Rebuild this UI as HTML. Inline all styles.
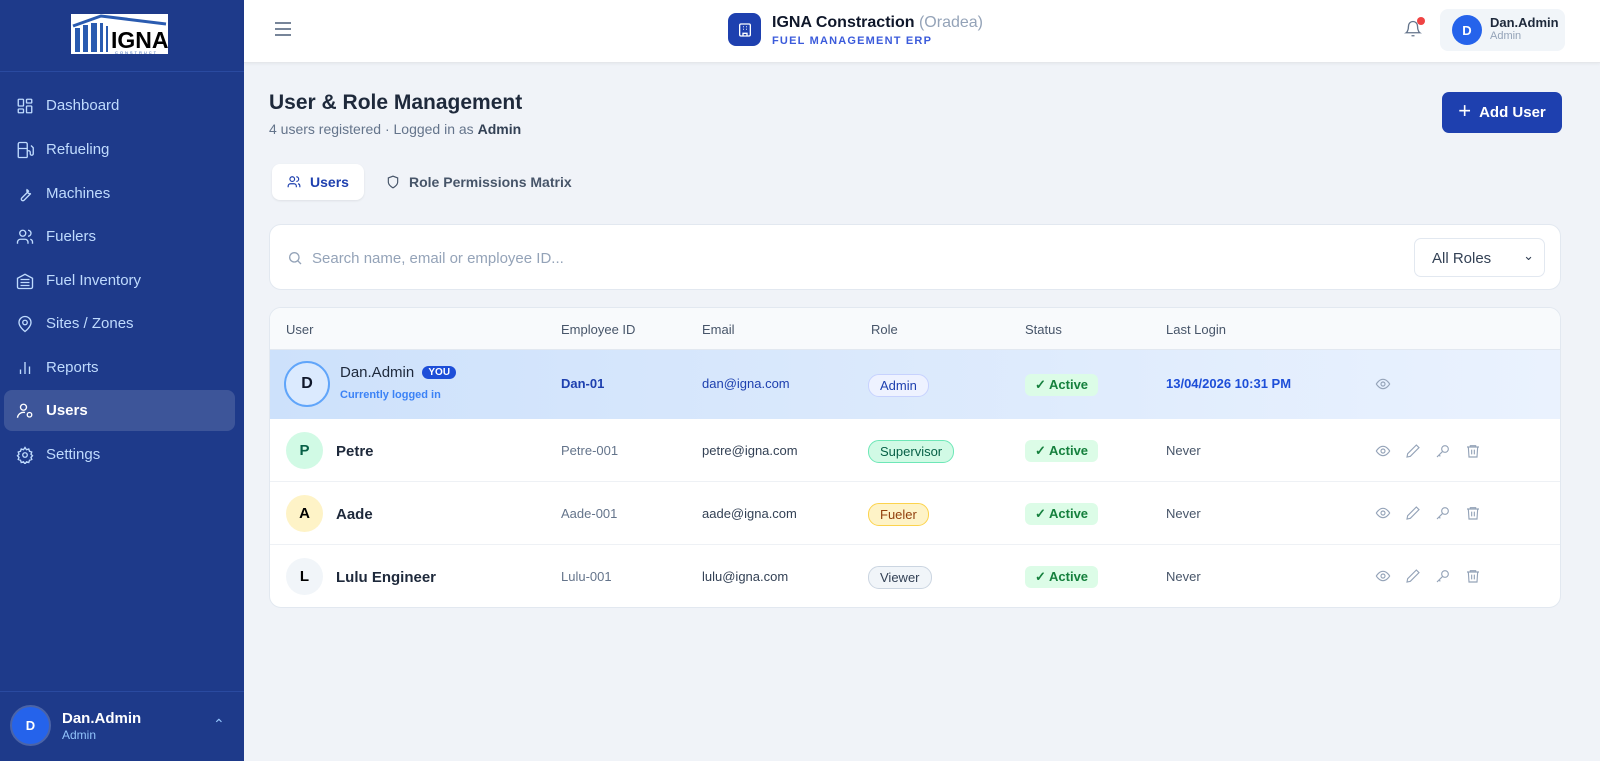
<!DOCTYPE html>
<html><head><meta charset="utf-8"><style>
*{box-sizing:border-box;margin:0;padding:0}
body{width:1600px;height:761px;overflow:hidden;font-family:"Liberation Sans",sans-serif;background:#f0f3f8;position:relative;color:#0f172a}
.sb{position:absolute;left:0;top:0;width:244px;height:761px;background:#1e3a8a}
.logo{position:absolute;left:70px;top:13px;width:99px;height:42px;background:#fff;border:1px solid #1e3a8a}
.sb .hr{position:absolute;left:0;top:71px;width:244px;height:1px;background:#2a4aa0}
.nav{position:absolute;left:4px;width:231px;height:41px;border-radius:8px;color:#bfdbfe;font-size:15px;display:flex;align-items:center;padding-left:12px}
.nav svg{width:18px;height:18px;margin-right:12px;stroke:#bfdbfe;fill:none;stroke-width:1.8}
.nav.act{background:#3d5599;color:#fff;font-weight:bold}
.nav.act svg{stroke:#fff}
.foot{position:absolute;left:0;top:691px;width:244px;height:70px;border-top:1px solid #2a4aa0}
.av{border-radius:50%;display:flex;align-items:center;justify-content:center;font-weight:bold}
.top{position:absolute;left:244px;top:0;right:0;height:63px;background:#fff;border-bottom:1px solid #e5e7eb;box-shadow:0 1px 3px rgba(0,0,0,.05)}
.card{position:absolute;background:#fff;border:1px solid #e2e8f0;border-radius:12px}
.th{position:absolute;top:322px;font-size:13px;color:#475569}
.row{position:absolute;left:270px;width:1290px;border-bottom:1px solid #eef1f5}
.c{position:absolute;font-size:13px}
.pill{position:absolute;font-size:13px;padding:3px 11px;border-radius:11px;border:1px solid}
.act2{position:absolute;left:1025px;font-size:13px;background:#dcfce7;color:#15803d;padding:3px 10px;border-radius:6px;font-weight:bold}
.icons{position:absolute;left:1375px;display:flex;gap:14px}
.icons svg{width:16px;height:16px;stroke:#94a3b8;fill:none;stroke-width:1.7}
</style></head><body>
<div class="sb">
 <div class="logo"><svg width="97" height="40" viewBox="0 0 97 40"><path d="M2 12 L30 2 L95 10" stroke="#2a5bb0" stroke-width="3" fill="none"/><rect x="4" y="14" width="5" height="24" fill="#2a5bb0"/><rect x="12" y="11" width="5" height="27" fill="#2a5bb0"/><rect x="20" y="9" width="6" height="29" fill="#2a5bb0"/><rect x="29" y="9" width="3" height="29" fill="#2a5bb0"/><rect x="35" y="12" width="2" height="26" fill="#2a5bb0"/><text x="40" y="34" font-family="Liberation Sans" font-weight="bold" font-size="23" fill="#000">IGNA</text><text x="44" y="40" font-size="4" fill="#2a5bb0" letter-spacing="2">CONSTRUCT</text></svg></div>
 <div class="hr"></div>
 <div class="nav" style="top:85px"><svg viewBox="0 0 24 24"><rect x="3" y="3" width="7" height="9" rx="1"/><rect x="14" y="3" width="7" height="5" rx="1"/><rect x="14" y="12" width="7" height="9" rx="1"/><rect x="3" y="16" width="7" height="5" rx="1"/></svg>Dashboard</div>
 <div class="nav" style="top:129px"><svg viewBox="0 0 24 24"><path d="M3 22V4a2 2 0 0 1 2-2h8a2 2 0 0 1 2 2v18M3 22h12M3 10h12M15 13h2a2 2 0 0 1 2 2v2a2 2 0 0 0 4 0V9l-3-3"/></svg>Refueling</div>
 <div class="nav" style="top:173px"><svg viewBox="0 0 24 24"><path d="M14.7 6.3a4 4 0 0 0 5 5l-9 9a2.1 2.1 0 0 1-3-3l9-9a4 4 0 0 0-2-2z"/></svg>Machines</div>
 <div class="nav" style="top:216px"><svg viewBox="0 0 24 24"><circle cx="9" cy="7" r="4"/><path d="M2 21v-2a4 4 0 0 1 4-4h6a4 4 0 0 1 4 4v2M16 3a4 4 0 0 1 0 8M22 21v-2a4 4 0 0 0-3-4"/></svg>Fuelers</div>
 <div class="nav" style="top:260px"><svg viewBox="0 0 24 24"><path d="M22 8.35V20a2 2 0 0 1-2 2H4a2 2 0 0 1-2-2V8.35L12 3z M6 18h12M6 14h12M6 10h12"/></svg>Fuel Inventory</div>
 <div class="nav" style="top:303px"><svg viewBox="0 0 24 24"><path d="M20 10c0 6-8 12-8 12s-8-6-8-12a8 8 0 0 1 16 0z"/><circle cx="12" cy="10" r="3"/></svg>Sites / Zones</div>
 <div class="nav" style="top:347px"><svg viewBox="0 0 24 24"><path d="M6 20v-6M12 20V4M18 20v-10"/></svg>Reports</div>
 <div class="nav act" style="top:390px"><svg viewBox="0 0 24 24"><circle cx="10" cy="7" r="4"/><path d="M2 21a8 8 0 0 1 10-7"/><circle cx="18" cy="17" r="3"/></svg>Users</div>
 <div class="nav" style="top:434px"><svg viewBox="0 0 24 24"><circle cx="12" cy="12" r="3"/><path d="M12 2l2 3 3-1 1 3 3 1-1 3 2 2-2 2 1 3-3 1-1 3-3-1-2 3-2-3-3 1-1-3-3-1 1-3-2-2 2-2-1-3 3-1 1-3 3 1z"/></svg>Settings</div>
 <div class="foot">
  <div class="av" style="position:absolute;left:10px;top:13px;width:41px;height:41px;background:#2563eb;border:2px solid #4b64a8;color:#fff;font-size:13px">D</div>
  <div style="position:absolute;left:62px;top:18px;color:#fff;font-weight:bold;font-size:15px">Dan.Admin</div>
  <div style="position:absolute;left:62px;top:36px;color:#93c5fd;font-size:12px">Admin</div>
  <div style="position:absolute;left:213px;top:24px;color:#93c5fd;font-size:14px">&#8963;</div>
 </div>
</div>
<div class="top">
 <svg style="position:absolute;left:30px;top:21px" width="18" height="16" viewBox="0 0 18 16"><path d="M1 2h16M1 8h16M1 14h16" stroke="#64748b" stroke-width="1.8"/></svg>
 <div style="position:absolute;left:484px;top:13px;width:33px;height:33px;border-radius:8px;background:#1e40af;display:flex;align-items:center;justify-content:center"><svg width="16" height="16" viewBox="0 0 24 24" fill="none" stroke="#fff" stroke-width="2"><rect x="4" y="3" width="16" height="18" rx="2"/><path d="M9 21v-4h6v4M9 7h1M14 7h1M9 11h1M14 11h1"/></svg></div>
 <div style="position:absolute;left:528px;top:14px;font-size:16px;font-weight:bold;color:#0f172a">IGNA Constraction <span style="font-weight:normal;color:#94a3b8">(Oradea)</span></div>
 <div style="position:absolute;left:528px;top:35px;font-size:11px;font-weight:bold;color:#3b5bdb;letter-spacing:1.2px">FUEL MANAGEMENT ERP</div>
 <svg style="position:absolute;left:1160px;top:19px" width="18" height="20" viewBox="0 0 24 24" fill="none" stroke="#64748b" stroke-width="1.8"><path d="M6 8a6 6 0 0 1 12 0c0 7 3 9 3 9H3s3-2 3-9M10 21h4"/></svg>
 <div style="position:absolute;left:1173px;top:17px;width:8px;height:8px;border-radius:50%;background:#ef4444"></div>
 <div style="position:absolute;left:1196px;top:9px;width:125px;height:42px;border-radius:8px;background:#f1f5f9">
  <div class="av" style="position:absolute;left:12px;top:6px;width:30px;height:30px;background:#2563eb;color:#fff;font-size:13px">D</div>
  <div style="position:absolute;left:50px;top:6px;font-size:13px;font-weight:bold;color:#1e293b">Dan.Admin</div>
  <div style="position:absolute;left:50px;top:21px;font-size:11px;color:#94a3b8">Admin</div>
 </div>
</div>
<div style="position:absolute;left:269px;top:91px;font-size:21px;font-weight:bold;color:#1e293b">User &amp; Role Management</div>
<div style="position:absolute;left:269px;top:121px;font-size:14px;color:#64748b">4 users registered · Logged in as <b style="color:#334155">Admin</b></div>
<div style="position:absolute;left:1442px;top:92px;width:120px;height:41px;background:#1e40af;border-radius:7px;color:#fff;font-weight:bold;font-size:15px;display:flex;align-items:center;justify-content:center"><span style="font-size:22px;font-weight:normal;margin-right:8px;margin-top:-3px">+</span>Add User</div>
<div style="position:absolute;left:272px;top:164px;width:92px;height:36px;background:#fff;border-radius:8px;box-shadow:0 1px 2px rgba(0,0,0,.08);display:flex;align-items:center;justify-content:center;color:#1e40af;font-weight:bold;font-size:14px"><svg width="14" height="14" viewBox="0 0 24 24" fill="none" stroke="#1e40af" stroke-width="2" style="margin-right:9px"><circle cx="9" cy="7" r="4"/><path d="M2 21v-2a4 4 0 0 1 4-4h6a4 4 0 0 1 4 4v2M16 3a4 4 0 0 1 0 8M22 21v-2a4 4 0 0 0-3-4"/></svg>Users</div>
<div style="position:absolute;left:386px;top:174px;color:#475569;font-weight:bold;font-size:14px;display:flex;align-items:center"><svg width="14" height="14" viewBox="0 0 24 24" fill="none" stroke="#475569" stroke-width="2" style="margin-right:9px"><path d="M12 22s8-4 8-10V5l-8-3-8 3v7c0 6 8 10 8 10z"/></svg>Role Permissions Matrix</div>
<div class="card" style="left:269px;top:224px;width:1292px;height:66px">
 <svg style="position:absolute;left:17px;top:25px" width="16" height="16" viewBox="0 0 24 24" fill="none" stroke="#94a3b8" stroke-width="2"><circle cx="11" cy="11" r="7"/><path d="M21 21l-5-5"/></svg>
 <div style="position:absolute;left:42px;top:25px;font-size:15px;color:#94a3b8">Search name, email or employee ID...</div>
 <div style="position:absolute;left:1144px;top:13px;width:131px;height:39px;border:1px solid #e2e8f0;border-radius:7px;font-size:15px;color:#334155;padding:11px 0 0 17px">All Roles<span style="position:absolute;right:10px;top:9px;font-size:13px">&#8964;</span></div>
</div>
<div class="card" style="left:269px;top:307px;width:1292px;height:301px;overflow:hidden">
 <div style="position:absolute;left:0;top:0;width:100%;height:42px;background:#f8fafc;border-bottom:1px solid #e2e8f0"></div>
 <div style="position:absolute;left:0;top:42px;width:100%;height:69px;background:linear-gradient(90deg,#cde1fb,#eaf2fe)"></div>
</div>
<div class="th" style="left:286px">User</div><div class="th" style="left:561px">Employee ID</div><div class="th" style="left:702px">Email</div><div class="th" style="left:871px">Role</div><div class="th" style="left:1025px">Status</div><div class="th" style="left:1166px">Last Login</div>

<div class="av" style="position:absolute;left:284px;top:361px;width:46px;height:46px;background:#dbeafe;border:2px solid #60a5fa;font-size:16px">D</div>
<div style="position:absolute;left:340px;top:364px;font-size:15px;color:#1e293b">Dan.Admin <span style="background:#1d4ed8;color:#fff;font-size:10px;font-weight:bold;padding:1px 6px;border-radius:7px;margin-left:4px;vertical-align:2px">YOU</span></div>
<div style="position:absolute;left:340px;top:389px;font-size:11px;font-weight:bold;color:#3b82f6">Currently logged in</div>
<div class="c" style="left:561px;top:376px;color:#1e40af;font-weight:bold">Dan-01</div>
<div class="c" style="left:702px;top:376px;color:#1e40af">dan@igna.com</div>
<div class="pill" style="left:868px;top:374px;background:#eef2ff;border-color:#c7d2fe;color:#1e40af">Admin</div>
<div class="act2" style="top:374px">✓ Active</div>
<div class="c" style="left:1166px;top:376px;color:#1d4ed8;font-weight:bold">13/04/2026 10:31 PM</div>
<div class="icons" style="top:376px"><svg viewBox="0 0 24 24"><path d="M2 12s4-7 10-7 10 7 10 7-4 7-10 7S2 12 2 12z"/><circle cx="12" cy="12" r="3"/></svg></div>

<div class="row" style="top:418px;height:64px"></div>
<div class="row" style="top:482px;height:63px"></div>

<div class="av" style="position:absolute;left:286px;top:432px;width:37px;height:37px;background:#d1fae5;color:#065f46;font-size:15px">P</div>
<div style="position:absolute;left:336px;top:443px;font-size:15px;font-weight:bold;color:#1e293b">Petre</div>
<div class="c" style="left:561px;top:443px;color:#64748b">Petre-001</div>
<div class="c" style="left:702px;top:443px;color:#334155">petre@igna.com</div>
<div class="pill" style="left:868px;top:440px;background:#d1fae5;border-color:#6ee7b7;color:#065f46">Supervisor</div>
<div class="act2" style="top:440px">✓ Active</div>
<div class="c" style="left:1166px;top:443px;color:#475569">Never</div>

<div class="av" style="position:absolute;left:286px;top:495px;width:37px;height:37px;background:#fef3c7;color:#000;font-size:15px">A</div>
<div style="position:absolute;left:336px;top:506px;font-size:15px;font-weight:bold;color:#1e293b">Aade</div>
<div class="c" style="left:561px;top:506px;color:#64748b">Aade-001</div>
<div class="c" style="left:702px;top:506px;color:#334155">aade@igna.com</div>
<div class="pill" style="left:868px;top:503px;background:#fef3c7;border-color:#fcd34d;color:#92400e">Fueler</div>
<div class="act2" style="top:503px">✓ Active</div>
<div class="c" style="left:1166px;top:506px;color:#475569">Never</div>

<div class="av" style="position:absolute;left:286px;top:558px;width:37px;height:37px;background:#f1f5f9;color:#000;font-size:15px">L</div>
<div style="position:absolute;left:336px;top:569px;font-size:15px;font-weight:bold;color:#1e293b">Lulu Engineer</div>
<div class="c" style="left:561px;top:569px;color:#64748b">Lulu-001</div>
<div class="c" style="left:702px;top:569px;color:#334155">lulu@igna.com</div>
<div class="pill" style="left:868px;top:566px;background:#f1f5f9;border-color:#cbd5e1;color:#334155">Viewer</div>
<div class="act2" style="top:566px">✓ Active</div>
<div class="c" style="left:1166px;top:569px;color:#475569">Never</div>

<div class="icons" style="top:443px"><svg viewBox="0 0 24 24"><path d="M2 12s4-7 10-7 10 7 10 7-4 7-10 7S2 12 2 12z"/><circle cx="12" cy="12" r="3"/></svg><svg viewBox="0 0 24 24"><path d="M17 3l4 4L8 20l-5 1 1-5z"/></svg><svg viewBox="0 0 24 24"><circle cx="15" cy="9" r="5"/><path d="M11 13l-8 8M6 18l2 2"/></svg><svg viewBox="0 0 24 24"><path d="M3 6h18M8 6V4h8v2M5 6l1 15h12l1-15M10 10v7M14 10v7"/></svg></div>
<div class="icons" style="top:505px"><svg viewBox="0 0 24 24"><path d="M2 12s4-7 10-7 10 7 10 7-4 7-10 7S2 12 2 12z"/><circle cx="12" cy="12" r="3"/></svg><svg viewBox="0 0 24 24"><path d="M17 3l4 4L8 20l-5 1 1-5z"/></svg><svg viewBox="0 0 24 24"><circle cx="15" cy="9" r="5"/><path d="M11 13l-8 8M6 18l2 2"/></svg><svg viewBox="0 0 24 24"><path d="M3 6h18M8 6V4h8v2M5 6l1 15h12l1-15M10 10v7M14 10v7"/></svg></div>
<div class="icons" style="top:568px"><svg viewBox="0 0 24 24"><path d="M2 12s4-7 10-7 10 7 10 7-4 7-10 7S2 12 2 12z"/><circle cx="12" cy="12" r="3"/></svg><svg viewBox="0 0 24 24"><path d="M17 3l4 4L8 20l-5 1 1-5z"/></svg><svg viewBox="0 0 24 24"><circle cx="15" cy="9" r="5"/><path d="M11 13l-8 8M6 18l2 2"/></svg><svg viewBox="0 0 24 24"><path d="M3 6h18M8 6V4h8v2M5 6l1 15h12l1-15M10 10v7M14 10v7"/></svg></div>
</body></html>
